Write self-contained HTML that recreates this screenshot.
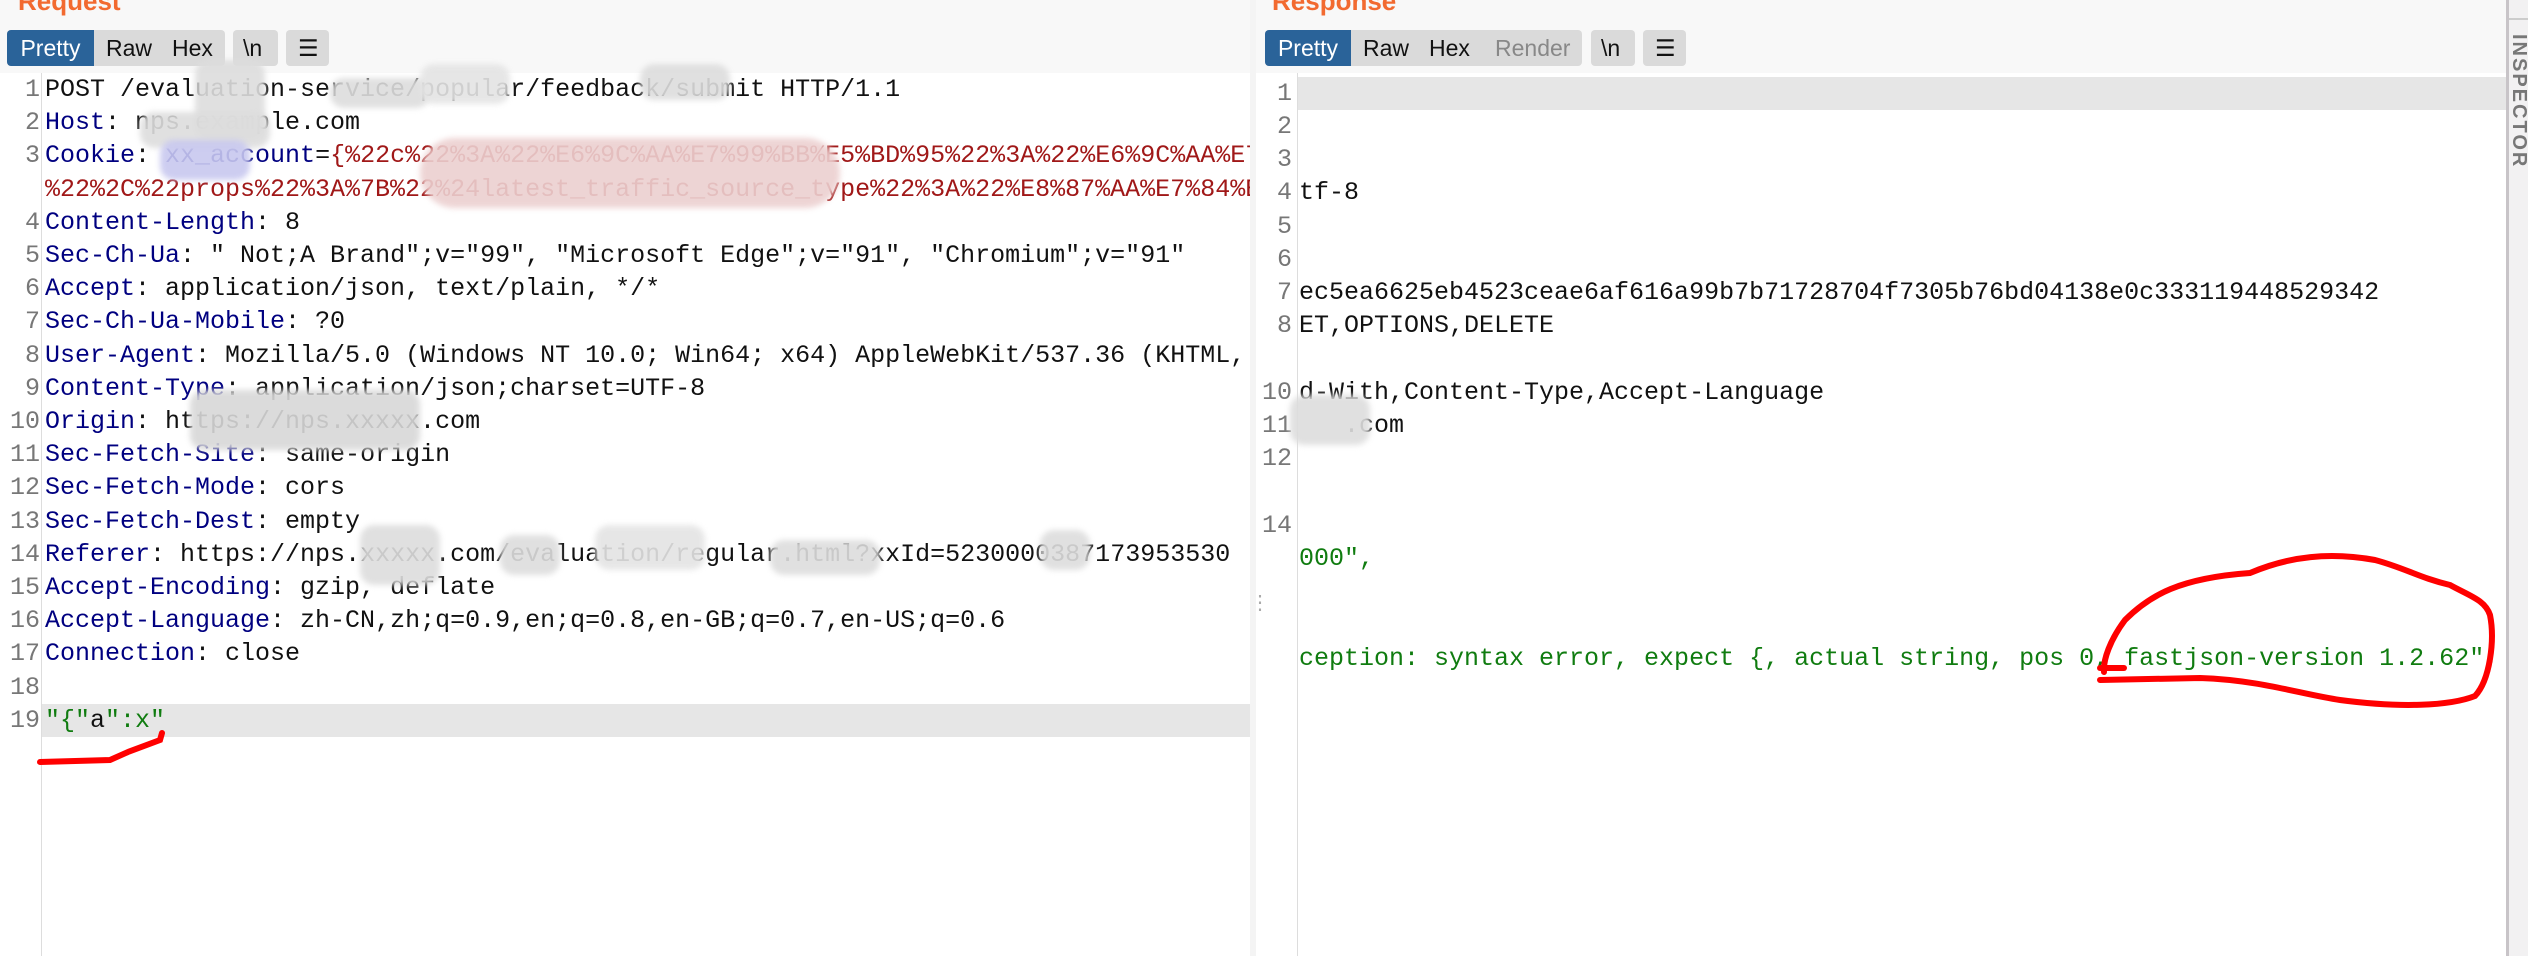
<!DOCTYPE html>
<html><head><meta charset="utf-8"><style>
*{margin:0;padding:0;box-sizing:border-box}
body{width:2528px;height:956px;background:#fff;position:relative;overflow:hidden;font-family:"Liberation Sans",sans-serif}
.bar{position:absolute;top:0;height:73px;background:#f8f8f8}
.title{position:absolute;top:-14px;color:#f26a30;font-weight:bold;font-size:26px}
.btn{position:absolute;top:30px;height:36px;font-size:23px;line-height:36px;color:#111;border-radius:4px;background:#dadada;padding-left:12px}
.sel{position:absolute;top:30px;height:36px;background:#2a6399;color:#fff;font-size:23px;line-height:36px;border-radius:4px 0 0 4px;text-align:center}
.ln{position:absolute;font-family:"Liberation Mono",monospace;font-size:25px;color:#777;text-align:right;width:40px;height:33px;line-height:33px}
.tx{position:absolute;font-family:"Liberation Mono",monospace;font-size:25px;color:#111;white-space:pre;height:33px;line-height:33px}
.k{color:#000080}.r{color:#a01818}.g{color:#107c10}
.hl{position:absolute;background:#e6e6e6;height:33px}
.blur{position:absolute;background:#cfcfcf;filter:blur(3px);border-radius:14px;opacity:.9}
.clip{position:absolute;left:0;top:0;height:956px;overflow:hidden}
</style></head><body>
<div class="bar" style="left:0;width:1250px"></div>
<div class="bar" style="left:1256px;width:1251px"></div>
<div class="title" style="left:18px">Request</div>
<div class="title" style="left:1272px">Response</div>

<div class="btn" style="left:7px;width:218px"></div>
<div class="sel" style="left:7px;width:87px">Pretty</div>
<div class="btn" style="left:94px;top:30px;background:none">Raw</div>
<div class="btn" style="left:160px;background:none">Hex</div>
<div class="btn" style="left:233px;width:45px;padding-left:10px">\n</div>
<div class="btn" style="left:286px;width:43px;padding-left:12px">☰</div>

<div class="btn" style="left:1265px;width:317px"></div>
<div class="sel" style="left:1265px;width:86px">Pretty</div>
<div class="btn" style="left:1351px;background:none">Raw</div>
<div class="btn" style="left:1417px;background:none">Hex</div>
<div class="btn" style="left:1483px;background:none;color:#888">Render</div>
<div class="btn" style="left:1591px;width:44px;padding-left:10px">\n</div>
<div class="btn" style="left:1643px;width:43px;padding-left:12px">☰</div>

<div style="position:absolute;left:41px;top:73px;width:1px;height:883px;background:#ddd"></div>
<div style="position:absolute;left:1250px;top:0;width:6px;height:956px;background:#f4f4f4"></div>
<div style="position:absolute;left:1297px;top:73px;width:1px;height:883px;background:#ddd"></div>
<div style="position:absolute;left:2506px;top:0;width:3px;height:956px;background:#c8c4c8"></div>
<div style="position:absolute;left:2509px;top:0;width:19px;height:956px;background:#f2f1f2"></div>
<div style="position:absolute;left:2509px;top:18px;width:19px;height:2px;background:#ccc"></div>
<div style="position:absolute;transform:rotate(90deg);transform-origin:left top;font-size:20px;font-weight:bold;color:#777;letter-spacing:2px;left:2530px;top:34px">INSPECTOR</div>

<div class="hl" style="left:42px;top:704px;width:1208px"></div>
<div class="hl" style="left:1298px;top:77px;width:1208px"></div>

<div class="clip" style="width:1250px">
<div class="ln" style="left:0;top:73px">1</div><div class="tx" style="left:45px;top:73px">POST /evaluation-service/popular/feedback/submit HTTP/1.1</div>
<div class="ln" style="left:0;top:106px">2</div><div class="tx" style="left:45px;top:106px"><span class="k">Host</span>: nps.example.com</div>
<div class="ln" style="left:0;top:139px">3</div><div class="tx" style="left:45px;top:139px"><span class="k">Cookie</span>: <span class="k">xx_account</span>=<span class="r">{%22c%22%3A%22%E6%9C%AA%E7%99%BB%E5%BD%95%22%3A%22%E6%9C%AA%E7%99%BB%E5%BD</span></div>
<div class="tx" style="left:45px;top:173px"><span class="r">%22%2C%22props%22%3A%7B%22%24latest_traffic_source_type%22%3A%22%E8%87%AA%E7%84%B6</span></div>
<div class="ln" style="left:0;top:206px">4</div><div class="tx" style="left:45px;top:206px"><span class="k">Content-Length</span>: 8</div>
<div class="ln" style="left:0;top:239px">5</div><div class="tx" style="left:45px;top:239px"><span class="k">Sec-Ch-Ua</span>: " Not;A Brand";v="99", "Microsoft Edge";v="91", "Chromium";v="91"</div>
<div class="ln" style="left:0;top:272px">6</div><div class="tx" style="left:45px;top:272px"><span class="k">Accept</span>: application/json, text/plain, */*</div>
<div class="ln" style="left:0;top:305px">7</div><div class="tx" style="left:45px;top:305px"><span class="k">Sec-Ch-Ua-Mobile</span>: ?0</div>
<div class="ln" style="left:0;top:339px">8</div><div class="tx" style="left:45px;top:339px"><span class="k">User-Agent</span>: Mozilla/5.0 (Windows NT 10.0; Win64; x64) AppleWebKit/537.36 (KHTML,</div>
<div class="ln" style="left:0;top:372px">9</div><div class="tx" style="left:45px;top:372px"><span class="k">Content-Type</span>: application/json;charset=UTF-8</div>
<div class="ln" style="left:0;top:405px">10</div><div class="tx" style="left:45px;top:405px"><span class="k">Origin</span>: https://nps.xxxxx.com</div>
<div class="ln" style="left:0;top:438px">11</div><div class="tx" style="left:45px;top:438px"><span class="k">Sec-Fetch-Site</span>: same-origin</div>
<div class="ln" style="left:0;top:471px">12</div><div class="tx" style="left:45px;top:471px"><span class="k">Sec-Fetch-Mode</span>: cors</div>
<div class="ln" style="left:0;top:505px">13</div><div class="tx" style="left:45px;top:505px"><span class="k">Sec-Fetch-Dest</span>: empty</div>
<div class="ln" style="left:0;top:538px">14</div><div class="tx" style="left:45px;top:538px"><span class="k">Referer</span>: https://nps.xxxxx.com/evaluation/regular.html?xxId=5230000387173953530</div>
<div class="ln" style="left:0;top:571px">15</div><div class="tx" style="left:45px;top:571px"><span class="k">Accept-Encoding</span>: gzip, deflate</div>
<div class="ln" style="left:0;top:604px">16</div><div class="tx" style="left:45px;top:604px"><span class="k">Accept-Language</span>: zh-CN,zh;q=0.9,en;q=0.8,en-GB;q=0.7,en-US;q=0.6</div>
<div class="ln" style="left:0;top:637px">17</div><div class="tx" style="left:45px;top:637px"><span class="k">Connection</span>: close</div>
<div class="ln" style="left:0;top:671px">18</div>
<div class="ln" style="left:0;top:704px">19</div><div class="tx" style="left:45px;top:704px"><span class="g">"{"</span>a<span class="g">":x"</span></div>

<div class="blur" style="left:195px;top:60px;width:70px;height:80px;background:#ddd"></div>
<div class="blur" style="left:330px;top:78px;width:100px;height:30px;background:#ddd"></div>
<div class="blur" style="left:420px;top:64px;width:90px;height:40px;background:#e4e4e4"></div>
<div class="blur" style="left:640px;top:64px;width:90px;height:36px;background:#ddd"></div>
<div class="blur" style="left:140px;top:112px;width:130px;height:36px;background:#ddd"></div>
<div class="blur" style="left:160px;top:140px;width:90px;height:40px;background:#c8c8ef"></div>
<div class="blur" style="left:420px;top:138px;width:420px;height:70px;background:#ecd0d0;border-radius:40px"></div>
<div class="blur" style="left:190px;top:390px;width:230px;height:60px;background:#d8d8d8"></div>
<div class="blur" style="left:360px;top:525px;width:80px;height:60px;background:#ddd"></div>
<div class="blur" style="left:500px;top:535px;width:60px;height:40px;background:#ddd"></div>
<div class="blur" style="left:595px;top:525px;width:110px;height:45px;background:#e4e4e4"></div>
<div class="blur" style="left:770px;top:540px;width:110px;height:35px;background:#ddd"></div>
<div class="blur" style="left:1040px;top:530px;width:50px;height:40px;background:#ddd"></div>
</div>

<div class="clip" style="left:1256px;width:1250px">
<div style="position:absolute;left:0;top:0">
<div class="ln" style="left:-4px;top:77px">1</div>
<div class="ln" style="left:-4px;top:110px">2</div>
<div class="ln" style="left:-4px;top:143px">3</div>
<div class="ln" style="left:-4px;top:176px">4</div><div class="tx" style="left:43px;top:176px">tf-8</div>
<div class="ln" style="left:-4px;top:210px">5</div>
<div class="ln" style="left:-4px;top:243px">6</div>
<div class="ln" style="left:-4px;top:276px">7</div><div class="tx" style="left:43px;top:276px">ec5ea6625eb4523ceae6af616a99b7b71728704f7305b76bd04138e0c333119448529342</div>
<div class="ln" style="left:-4px;top:309px">8</div><div class="tx" style="left:43px;top:309px">ET,OPTIONS,DELETE</div>
<div class="ln" style="left:-4px;top:376px">10</div><div class="tx" style="left:43px;top:376px">d-With,Content-Type,Accept-Language</div>
<div class="ln" style="left:-4px;top:409px">11</div><div class="tx" style="left:43px;top:409px">   .com</div>
<div class="ln" style="left:-4px;top:442px">12</div>
<div class="ln" style="left:-4px;top:509px">14</div>
<div class="tx g" style="left:43px;top:542px">000",</div>
<div class="tx g" style="left:43px;top:642px">ception: syntax error, expect {, actual string, pos 0, fastjson-version 1.2.62",</div>
<div class="blur" style="left:34px;top:395px;width:80px;height:50px;background:#ddd"></div>
</div>
</div>

<svg style="position:absolute;left:0;top:0" width="2528" height="956">
<path d="M40 762 L110 760 L128 752 L160 740 L162 733" stroke="#f00" stroke-width="6" fill="none" stroke-linecap="round"/>
<path d="M2100 668 L2124 668" stroke="#f00" stroke-width="6" fill="none" stroke-linecap="round"/>
<path d="M2100 680 L2200 678 C2260 680 2300 694 2340 700 C2400 708 2450 706 2475 696 C2490 680 2495 640 2490 615 C2485 600 2470 596 2450 585 C2420 578 2405 568 2375 560 C2330 552 2290 556 2250 573 C2180 578 2150 595 2125 620 C2110 640 2103 660 2104 672" stroke="#f00" stroke-width="6" fill="none" stroke-linecap="round"/>
</svg>
<div style="position:absolute;left:1250px;top:590px;color:#aaa;font-size:20px">⋮</div>
</body></html>
